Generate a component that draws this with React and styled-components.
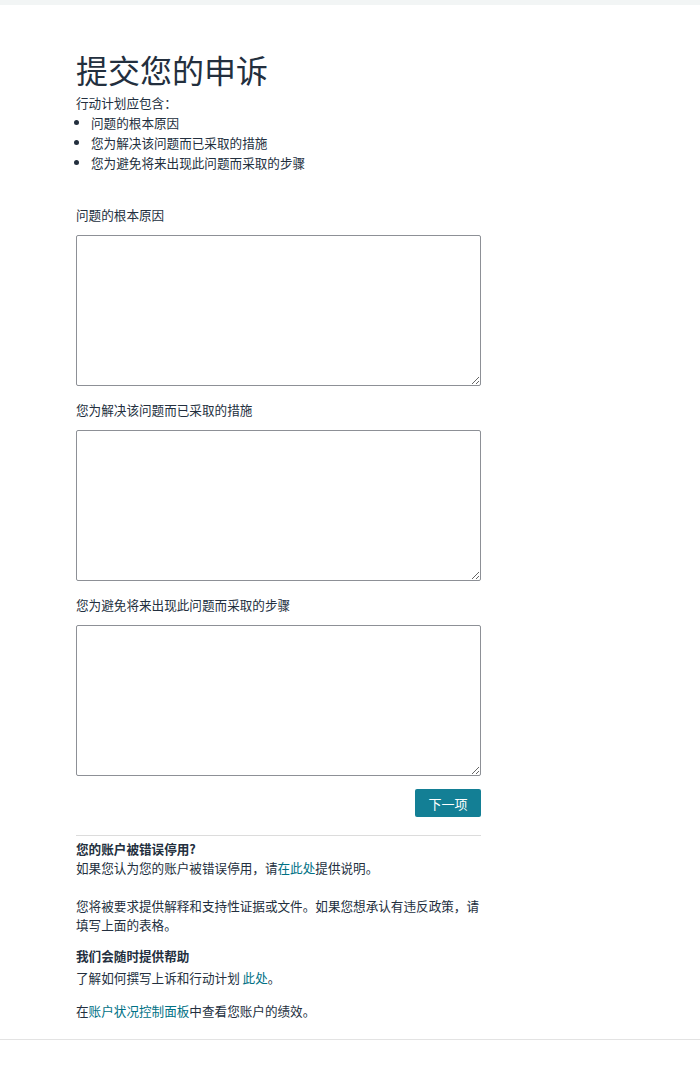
import styled, { createGlobalStyle } from "styled-components";

const GlobalStyle = createGlobalStyle`
  body {
    margin: 0;
    background: #fff;
    font-family: "Noto Sans CJK SC", "Liberation Sans", sans-serif;
    color: #232f3e;
  }
`;

const TopBar = styled.div`
  height: 5px;
  background: #f2f5f5;
`;

const Page = styled.main`
  width: 405px;
  padding: 45px 0 0 76px;
  font-size: 12.6px;
`;

const Title = styled.h1`
  margin: 0;
  font-size: 32px;
  font-weight: 400;
  line-height: 38px;
  color: #232f3e;
`;

const Intro = styled.p`
  margin: 5px 0 0;
  line-height: 20px;
`;

const Bullets = styled.ul`
  margin: 0;
  padding-left: 15px;
  line-height: 20px;
`;

const Field = styled.div`
  display: flex;
  flex-direction: column;
  gap: 10px;
  margin-top: ${(p) => p.$top}px;
`;

const Label = styled.label`
  line-height: 20px;
`;

const TextArea = styled.textarea`
  box-sizing: border-box;
  width: 405px;
  height: 151px;
  margin: 0;
  border: 1px solid #8d9096;
  border-radius: 2px;
  font-family: inherit;
  font-size: 12.6px;
  resize: vertical;
  display: block;
`;

const Actions = styled.div`
  display: flex;
  justify-content: flex-end;
  margin-top: 13px;
`;

const Button = styled.button`
  width: 66px;
  height: 28px;
  border: none;
  border-radius: 2px;
  background: #137f95;
  color: #fff;
  font-family: inherit;
  font-size: 13px;
  cursor: pointer;
`;

const Help = styled.section`
  margin-top: 18px;
  border-top: 1px solid #dcdcdc;
  padding-top: 3px;
  padding-bottom: 19px;
`;

const HelpTitle = styled.h4`
  margin: ${(p) => p.$top || 0}px 0 ${(p) => p.$bottom || 0}px;
  font-size: 12.6px;
  font-weight: 700;
  line-height: 19px;
`;

const Para = styled.p`
  margin: ${(p) => p.$top || 0}px 0 0;
  line-height: 19px;
`;

const Link = styled.a`
  color: #007185;
  text-decoration: none;
`;

const BottomLine = styled.div`
  height: 1px;
  background: #e3e3e3;
`;

const fields = [
  { label: "问题的根本原因", top: 32 },
  { label: "您为解决该问题而已采取的措施", top: 14 },
  { label: "您为避免将来出现此问题而采取的步骤", top: 14 },
];

export default function App() {
  return (
    <>
      <GlobalStyle />
      <TopBar />
      <Page>
        <Title>提交您的申诉</Title>
        <Intro>行动计划应包含：</Intro>
        <Bullets>
          <li>问题的根本原因</li>
          <li>您为解决该问题而已采取的措施</li>
          <li>您为避免将来出现此问题而采取的步骤</li>
        </Bullets>

        {fields.map((f) => (
          <Field key={f.label} $top={f.top}>
            <Label>{f.label}</Label>
            <TextArea />
          </Field>
        ))}

        <Actions>
          <Button>下一项</Button>
        </Actions>

        <Help>
          <HelpTitle>您的账户被错误停用?</HelpTitle>
          <Para>
            如果您认为您的账户被错误停用，请<Link href="#">在此处</Link>提供说明。
          </Para>
          <Para $top={19}>
            您将被要求提供解释和支持性证据或文件。如果您想承认有违反政策，请填写上面的表格。
          </Para>
          <HelpTitle $top={12} $bottom={3}>我们会随时提供帮助</HelpTitle>
          <Para>
            了解如何撰写上诉和行动计划 <Link href="#">此处</Link>。
          </Para>
          <Para $top={14}>
            在<Link href="#">账户状况控制面板</Link>中查看您账户的绩效。
          </Para>
        </Help>
      </Page>
      <BottomLine />
    </>
  );
}
